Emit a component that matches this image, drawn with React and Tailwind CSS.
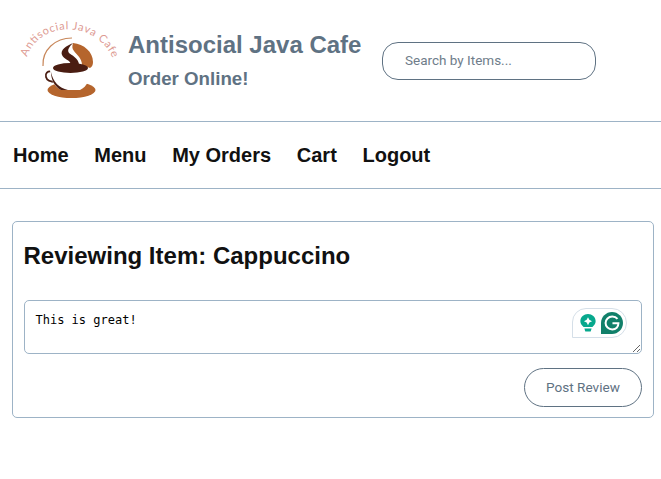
import React from "react";

// Curved logo with real text on a path
const Logo = () => (
  <svg width="100" height="90" viewBox="20 14 100 90" className="shrink-0 overflow-visible">
    <defs>
      <path id="logoArc" d="M 27 57 C 40 20, 95 20, 112 57" fill="none" />
    </defs>
    <text fill="#dd9a92" fontSize="11" fontFamily="'Lato', sans-serif">
      <textPath href="#logoArc" textLength="109" lengthAdjust="spacing">Antisocial Java Cafe</textPath>
    </text>
    {/* thin arc */}
    <path d="M 43 66 C 42 50, 55 38, 72 38" fill="none" stroke="#c8875a" strokeWidth="1.2" />
    {/* orange crescent */}
    <path d="M 73 43 C 84 44, 93 52, 93 62 C 93 65, 92 67, 90 68 L 82 65 C 82 58, 76 54, 74 51 C 72 49, 72 46, 73 43 Z" fill="#b5652d" />
    {/* saucer */}
    <ellipse cx="71.5" cy="90" rx="24" ry="8" fill="#b5652d" />
    {/* handle */}
    <path d="M 53 72 C 47 70, 45 74, 46 77 C 47 81, 52 82, 56 82" fill="none" stroke="#4a1d12" strokeWidth="1.8" />
    {/* cup */}
    <path d="M 50 68 L 91 68 C 91 78, 87 87, 80 90 L 61 90 C 54 87, 50 78, 50 68 Z" fill="#ffffff" />
    <path d="M 51 72 C 53 82, 59 88, 68 90 L 61 90 C 55 87, 51 80, 51 72 Z" fill="#4a1d12" />
    {/* steam */}
    <path d="M 73 43 C 66 46, 60 50, 62 55 C 64 60, 70 59, 71 65 L 79 65 C 79 58, 71 55, 69 53 C 67 50, 69 47, 73 43 Z" fill="#4a1d12" />
    {/* coffee */}
    <ellipse cx="70.5" cy="68" rx="17.5" ry="5" fill="#4a1d12" />
  </svg>
);

const GrammarlyWidget = () => (
  <div className="absolute top-[8px] right-[15px] w-[55px] h-[30px] bg-white border border-[#d5dfe8] rounded-tl-[14px] rounded-tr-[15px] rounded-br-[15px] flex items-center pl-[7px] gap-[5px]">
    <svg width="16" height="18" viewBox="0 0 17 20">
      <path d="M 8.5 0 C 4 0 0 3.4 0 8 C 0 10.8 1.8 12.4 3.6 14.4 L 13.4 14.4 C 15.2 12.4 17 10.8 17 8 C 17 3.4 13 0 8.5 0 Z" fill="#07a88d" />
      <path d="M 4.5 16 L 12.5 16 L 11.5 19.5 L 5.5 19.5 Z" fill="#07a88d" />
      <path d="M 8.5 3.5 L 10 6.5 L 13 8 L 10 9.5 L 8.5 12.5 L 7 9.5 L 4 8 L 7 6.5 Z" fill="#ffffff" />
    </svg>
    <svg width="22" height="22" viewBox="0 0 24 24">
      <path d="M 12 0 C 18.6 0 24 5.4 24 12 C 24 18.6 18.6 24 12 24 L 0 24 L 0 12 C 0 5.4 5.4 0 12 0 Z" fill="#11806a" />
      <path d="M 18 7.5 C 16.6 5.8 14.5 5 12.3 5 C 8.2 5 5 8.1 5 12 C 5 15.9 8.2 19 12.3 19 C 16.2 19 19 16.4 19 12.3 L 12.5 12.3" fill="none" stroke="#ffffff" strokeWidth="2.2" />
    </svg>
  </div>
);

export default function App() {
  return (
    <div className="bg-white min-h-[479px] font-['Liberation_Sans',sans-serif] text-[#111111]">
      {/* HEADER */}
      <div className="h-[122px] border-b border-[#9db3c6] flex items-center pl-[20px] pb-[3px]">
        <Logo />
        <div className="ml-[8px] w-[254px] pt-[3px]">
          <h1 className="text-[24px] leading-[28px] font-bold text-[#5f7283]">Antisocial Java Cafe</h1>
          <h2 className="mt-[8px] text-[18.7px] leading-[24px] font-bold text-[#5f7283]">Order Online!</h2>
        </div>
        <input
          type="text"
          placeholder="Search by Items..."
          className="w-[214px] h-[38px] mt-[3px] rounded-[16px] border border-[#5f7283] pl-[22px] pb-[2px] text-[13.5px] font-['Roboto',sans-serif] outline-none placeholder:text-[#6f7d8a]"
        />
      </div>

      {/* NAV */}
      <nav className="h-[67px] border-b border-[#9db3c6] flex items-center gap-[25.7px] pl-[13px] text-[20px] font-bold">
        <span>Home</span>
        <span>Menu</span>
        <span>My Orders</span>
        <span>Cart</span>
        <span>Logout</span>
      </nav>

      {/* REVIEW CARD */}
      <div className="ml-[12px] mr-[7px] mt-[32px] h-[197px] border border-[#9db3c6] rounded-[5px] pl-[10.5px] pr-[11px] pt-[20px]">
        <h3 className="text-[24px] leading-[28px] font-bold">Reviewing Item: Cappuccino</h3>
        <div className="relative mt-[30px]">
          <textarea
            defaultValue="This is great!"
            className="block w-full h-[54px] border border-[#9db3c6] rounded-[5px] pl-[11px] pt-[12px] text-[12px] leading-[14px] text-black font-['DejaVu_Sans_Mono',monospace] outline-none"
          />
          <GrammarlyWidget />
        </div>
        <div className="flex justify-end mt-[14px]">
          <button className="w-[118px] h-[39px] rounded-[20px] border border-[#5f7283] text-[#5f7283] text-[13.6px] font-['Roboto',sans-serif]">
            Post Review
          </button>
        </div>
      </div>
    </div>
  );
}
